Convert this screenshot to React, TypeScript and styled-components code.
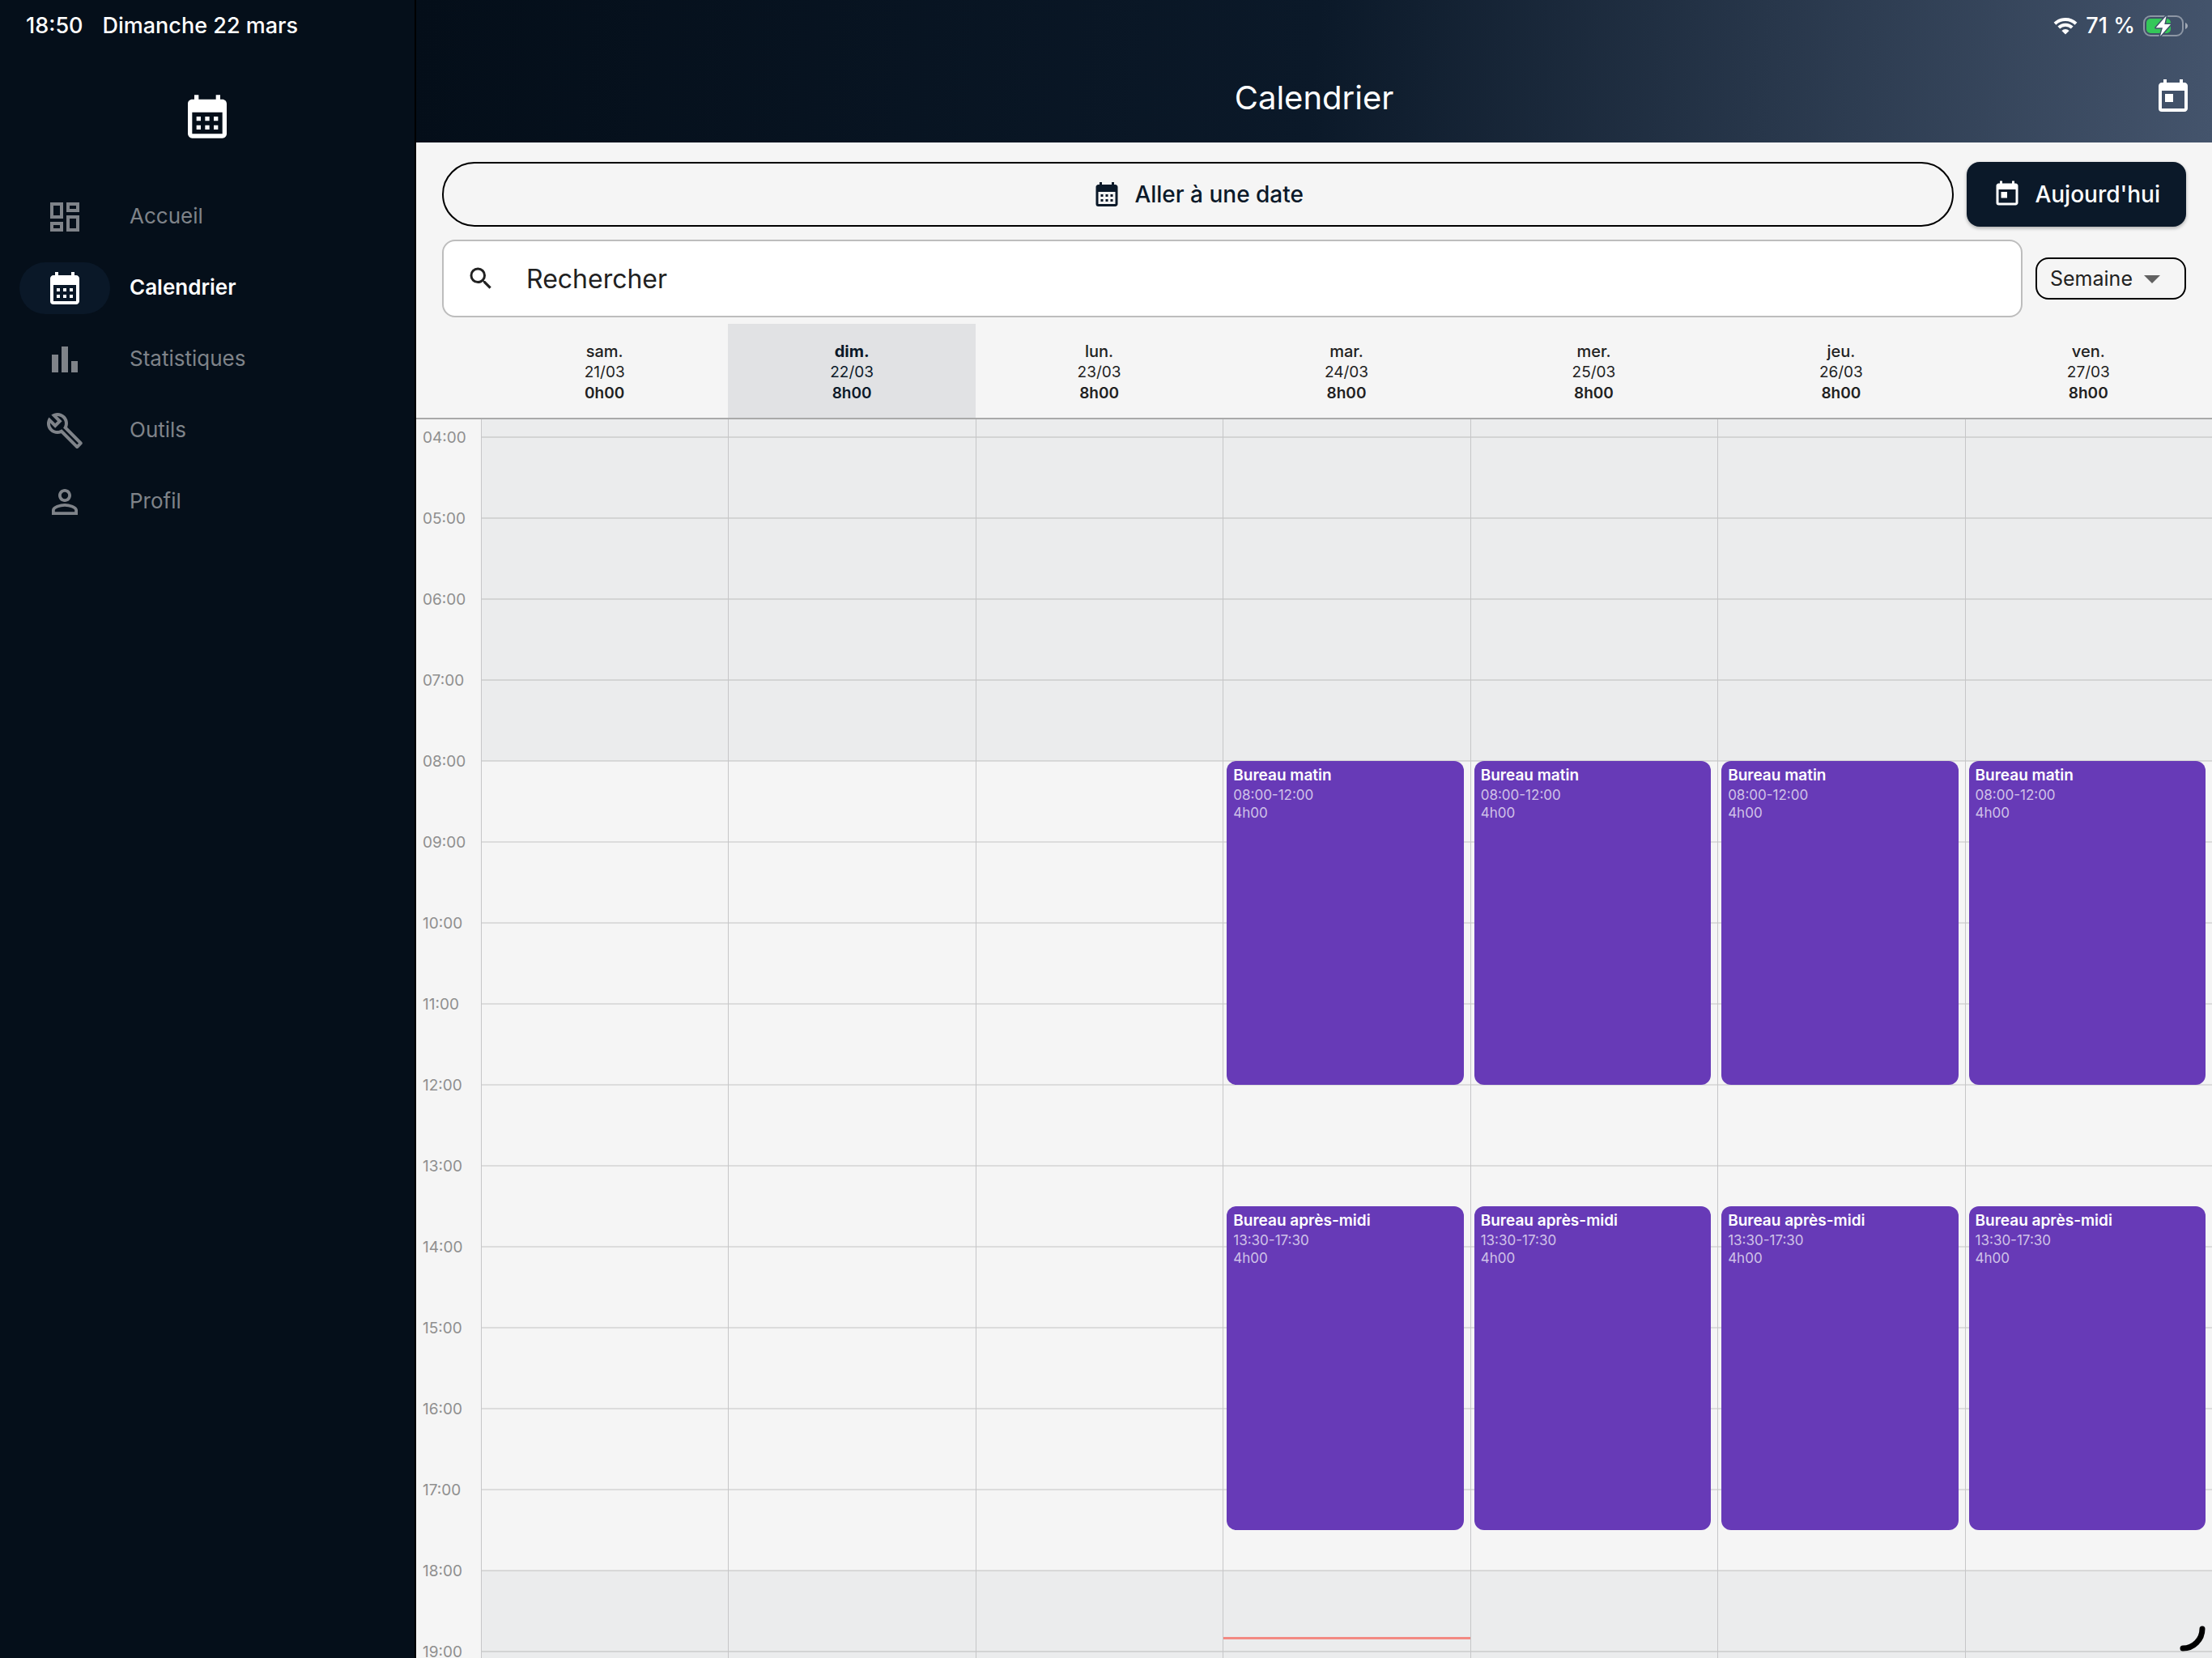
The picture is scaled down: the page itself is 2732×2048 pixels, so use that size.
import React, { useState } from 'react';
import styled, { createGlobalStyle } from 'styled-components';
import {
  MdArrowDropDown,
  MdBarChart,
  MdCalendarMonth,
  MdOutlineBuild,
  MdOutlineDashboard,
  MdPersonOutline,
  MdSearch,
  MdToday,
} from 'react-icons/md';

const FIRST_HOUR = 4;
const LAST_HOUR = 19;
const WORK_START = 8;
const WORK_END = 18;

const HOURS = Array.from({ length: LAST_HOUR - FIRST_HOUR + 1 }, (_, i) => FIRST_HOUR + i);

interface CalendarEvent {
  title: string;
  start: string;
  end: string;
  duration: string;
}

interface Day {
  name: string;
  date: string;
  total: string;
  today?: boolean;
  nowLine?: boolean;
  events: CalendarEvent[];
}

const WORKDAY: CalendarEvent[] = [
  { title: 'Bureau matin', start: '08:00', end: '12:00', duration: '4h00' },
  { title: 'Bureau après-midi', start: '13:30', end: '17:30', duration: '4h00' },
];

const DAYS: Day[] = [
  { name: 'sam.', date: '21/03', total: '0h00', events: [] },
  { name: 'dim.', date: '22/03', total: '8h00', today: true, events: [] },
  { name: 'lun.', date: '23/03', total: '8h00', events: [] },
  { name: 'mar.', date: '24/03', total: '8h00', nowLine: true, events: WORKDAY },
  { name: 'mer.', date: '25/03', total: '8h00', events: WORKDAY },
  { name: 'jeu.', date: '26/03', total: '8h00', events: WORKDAY },
  { name: 'ven.', date: '27/03', total: '8h00', events: WORKDAY },
];

const NAV_ITEMS = [
  { label: 'Accueil', icon: MdOutlineDashboard },
  { label: 'Calendrier', icon: MdCalendarMonth },
  { label: 'Statistiques', icon: MdBarChart },
  { label: 'Outils', icon: MdOutlineBuild },
  { label: 'Profil', icon: MdPersonOutline },
];

// Row 1 is the sliver above the first hour, then two rows per hour
const rowOf = (time: string) => {
  const [h, m] = time.split(':').map(Number);
  return 2 + (h - FIRST_HOUR) * 2 + (m >= 30 ? 1 : 0);
};

const isOff = (hour: number) => hour < WORK_START || hour >= WORK_END;

const GlobalStyle = createGlobalStyle`
  *, *::before, *::after {
    box-sizing: border-box;
  }

  body {
    margin: 0;
    background: #f5f5f5;
    color: #212121;
    font-family: Inter, 'Liberation Sans', sans-serif;
  }

  button, input, select {
    font-family: inherit;
    margin: 0;
  }
`;

const Screen = styled.div`
  display: flex;
  height: 100vh;
  overflow: hidden;
`;

const Sidebar = styled.aside`
  flex: none;
  width: 514px;
  background: #050f1a;
  border-right: 2px solid #000;
  color: #fff;
`;

const StatusBar = styled.div<{ $end?: boolean }>`
  display: flex;
  align-items: center;
  justify-content: ${props => (props.$end ? 'flex-end' : 'flex-start')};
  gap: ${props => (props.$end ? '10px' : '24px')};
  height: 64px;
  padding: 0 ${props => (props.$end ? '30px' : '32px')};
  color: #fff;
  font-size: 27px;
  font-weight: 500;
  line-height: 32px;
`;

const Logo = styled.div`
  display: flex;
  justify-content: center;
  padding: 48px 0;
`;

const Nav = styled.nav`
  display: flex;
  flex-direction: column;
`;

const NavLink = styled.a<{ $active: boolean }>`
  display: flex;
  align-items: center;
  gap: 24px;
  height: 88px;
  padding-left: 24px;
  color: ${props => (props.$active ? '#fff' : '#7f8389')};
  font-size: 26px;
  font-weight: ${props => (props.$active ? 600 : 400)};
  text-decoration: none;
`;

const NavIcon = styled.span<{ $active: boolean }>`
  display: flex;
  align-items: center;
  justify-content: center;
  width: 112px;
  height: 64px;
  border-radius: 32px;
  background: ${props => (props.$active ? '#0a1828' : 'transparent')};
`;

const NavLabel = styled.span`
  padding-bottom: 4px;
`;

const Main = styled.main`
  display: flex;
  flex-direction: column;
  flex: 1;
  min-width: 0;
`;

const Header = styled.header`
  flex: none;
  background: linear-gradient(95deg, #040e19 0%, #0b1929 50%, #44546c 100%);
`;

const AppBar = styled.div`
  display: grid;
  grid-template-columns: 1fr auto 1fr;
  align-items: center;
  height: 112px;
  padding: 0 24px;
  color: #fff;
`;

const Title = styled.h1`
  grid-column: 2;
  margin: 0;
  padding-top: 2px;
  font-size: 40px;
  font-weight: 400;
  line-height: 56px;
`;

const IconButton = styled.button`
  display: flex;
  justify-self: end;
  padding: 0;
  border: 0;
  background: none;
  color: inherit;
  cursor: pointer;
`;

const Toolbar = styled.div`
  display: flex;
  flex-direction: column;
  flex: none;
  gap: 16px;
  padding: 24px 32px 8px;
`;

const ToolbarRow = styled.div`
  display: flex;
  align-items: center;
  gap: 16px;
`;

const Button = styled.button<{ $filled?: boolean }>`
  display: flex;
  flex: ${props => (props.$filled ? 'none' : '1')};
  align-items: center;
  justify-content: center;
  gap: 16px;
  height: 80px;
  padding: 0 32px;
  border: ${props => (props.$filled ? '0' : '2px solid #000')};
  border-radius: ${props => (props.$filled ? '16px' : '40px')};
  background: ${props => (props.$filled ? '#0b1929' : 'transparent')};
  box-shadow: ${props => (props.$filled ? '0 2px 4px rgba(0, 0, 0, 0.3)' : 'none')};
  color: ${props => (props.$filled ? '#fff' : '#0b1929')};
  font-size: 28px;
  font-weight: 500;
  cursor: pointer;
`;

const SearchField = styled.label`
  display: flex;
  flex: 1;
  align-items: center;
  gap: 38px;
  height: 96px;
  padding: 0 28px;
  border: 2px solid #bdbdbd;
  border-radius: 16px;
  background: #fff;
  color: #212121;
`;

const SearchInput = styled.input`
  flex: 1;
  min-width: 0;
  padding: 2px 0 0;
  border: 0;
  outline: 0;
  background: none;
  color: #212121;
  font-size: 32px;
  line-height: 48px;

  &::placeholder {
    color: #212121;
    opacity: 1;
  }
`;

const SelectBox = styled.div`
  display: grid;
  grid-template-columns: auto 48px;
  align-items: center;
  height: 52px;
  padding: 0 16px;
  border: 2px solid #000;
  border-radius: 16px;
  color: #616161;
`;

const Select = styled.select`
  grid-row: 1;
  grid-column: 1 / 3;
  width: 100%;
  padding: 0 48px 0 0;
  border: 0;
  outline: 0;
  appearance: none;
  background: none;
  color: #212121;
  font-size: 25px;
  line-height: 40px;
`;

const SelectArrow = styled(MdArrowDropDown)`
  grid-row: 1;
  grid-column: 2;
  pointer-events: none;
`;

const WeekHeader = styled.div`
  display: grid;
  flex: none;
  grid-template-columns: 80px repeat(7, 1fr);
  border-bottom: 2px solid #a9a9a9;
`;

const DayHeading = styled.div<{ $today?: boolean }>`
  display: flex;
  flex-direction: column;
  align-items: center;
  height: 116px;
  padding-top: 21px;
  background: ${props => (props.$today ? '#e1e2e4' : 'transparent')};
  color: ${props => (props.$today ? '#0b1929' : '#212121')};
  font-size: 19px;
  line-height: 26px;

  &:first-of-type {
    grid-column: 2;
  }
`;

const DayName = styled.span<{ $today?: boolean }>`
  font-size: 20px;
  font-weight: ${props => (props.$today ? 700 : 500)};
`;

const DayTotal = styled.span`
  font-weight: 600;
`;

const Week = styled.div`
  display: grid;
  flex: 1;
  grid-template-columns: 80px repeat(7, 1fr);
  min-height: 0;
  overflow: hidden;
`;

const HourLabels = styled.div`
  display: flex;
  flex-direction: column;
  padding: 9px 8px 0;
  color: #8f8f8f;
  font-size: 19px;
  line-height: 28px;
`;

const HourLabel = styled.time`
  flex: none;
  height: 100px;
`;

const DayColumn = styled.div`
  display: grid;
  grid-template-rows: 22px repeat(${HOURS.length * 2}, 50px);
  grid-template-columns: 1fr;
  border-left: 1px solid #c6c6c8;
`;

const Slot = styled.div<{ $row: number; $off: boolean }>`
  grid-row: ${props => (props.$row === 1 ? '1' : `${props.$row} / span 2`)};
  grid-column: 1;
  border: solid rgba(0, 0, 0, 0.1);
  border-width: ${props => (props.$row === 1 ? '0 0 1px' : '1px 0')};
  background: ${props => (props.$off ? '#ebeced' : 'transparent')};
`;

const EventCard = styled.article<{ $from: number; $to: number }>`
  grid-row: ${props => props.$from} / ${props => props.$to};
  grid-column: 1;
  z-index: 1;
  margin: 0 8px 0 4px;
  padding: 5px 8px;
  border-radius: 12px;
  background: #673ab7;
  color: rgba(255, 255, 255, 0.7);
  font-size: 17px;
  line-height: 22px;
`;

const EventTitle = styled.h2`
  margin: 0;
  color: #fff;
  font-size: 19px;
  font-weight: 600;
  line-height: 26px;
`;

const EventText = styled.p`
  margin: 0;
`;

const NowLine = styled.div`
  grid-row: ${rowOf('18:30')};
  grid-column: 1;
  z-index: 1;
  height: 3px;
  margin-top: 32px;
  background: #f38a82;
`;

const Spinner = styled.svg`
  position: fixed;
  right: 8px;
  bottom: 8px;
`;

const WifiIcon = () => (
  <svg width="30" height="22" viewBox="0 0 30 22" fill="none" stroke="#fff" strokeWidth="4">
    <path d="M2 8.2a18.6 18.6 0 0 1 26 0" />
    <path d="M6.8 13a11.8 11.8 0 0 1 16.4 0" />
    <path d="M15 21.5l-4.6-4.6a6.6 6.6 0 0 1 9.2 0z" fill="#fff" stroke="none" />
  </svg>
);

const BatteryIcon = () => (
  <svg width="55" height="26" viewBox="0 0 55 26">
    <rect x="1" y="1" width="48" height="24" rx="8" fill="none" stroke="#fff" strokeOpacity="0.4" strokeWidth="2" />
    <path d="M52 9c4 1.6 4 6.4 0 8z" fill="#fff" fillOpacity="0.5" />
    <rect x="4" y="4" width="30" height="18" rx="5" fill="#34c759" />
    <path
      d="M28.6 .5L15.7 15.3H24L21 25.7L34 11H26.3z"
      fill="#fff"
      stroke="#40516a"
      strokeWidth="3"
      strokeLinejoin="round"
      paintOrder="stroke"
    />
  </svg>
);

const App: React.FC = () => {
  const [active, setActive] = useState('Calendrier');
  const [query, setQuery] = useState('');
  const [view, setView] = useState('Semaine');

  return (
    <Screen>
      <GlobalStyle />

      <Sidebar>
        <StatusBar>
          <span>18:50</span>
          <span>Dimanche 22 mars</span>
        </StatusBar>
        <Logo>
          <MdCalendarMonth size={64} />
        </Logo>
        <Nav>
          {NAV_ITEMS.map(({ label, icon: Icon }) => (
            <NavLink
              key={label}
              href={`#${label.toLowerCase()}`}
              $active={active === label}
              onClick={() => setActive(label)}
            >
              <NavIcon $active={active === label}>
                <Icon size={48} />
              </NavIcon>
              <NavLabel>{label}</NavLabel>
            </NavLink>
          ))}
        </Nav>
      </Sidebar>

      <Main>
        <Header>
          <StatusBar $end>
            <WifiIcon />
            <span>71 %</span>
            <BatteryIcon />
          </StatusBar>
          <AppBar>
            <Title>Calendrier</Title>
            <IconButton type="button" aria-label="Aujourd'hui">
              <MdToday size={48} />
            </IconButton>
          </AppBar>
        </Header>

        <Toolbar>
          <ToolbarRow>
            <Button type="button">
              <MdCalendarMonth size={36} />
              Aller à une date
            </Button>
            <Button type="button" $filled>
              <MdToday size={36} />
              Aujourd'hui
            </Button>
          </ToolbarRow>
          <ToolbarRow>
            <SearchField>
              <MdSearch size={36} />
              <SearchInput
                type="text"
                placeholder="Rechercher"
                aria-label="Rechercher"
                value={query}
                onChange={e => setQuery(e.target.value)}
              />
            </SearchField>
            <SelectBox>
              <Select aria-label="Affichage" value={view} onChange={e => setView(e.target.value)}>
                <option>Jour</option>
                <option>Semaine</option>
                <option>Mois</option>
              </Select>
              <SelectArrow size={48} />
            </SelectBox>
          </ToolbarRow>
        </Toolbar>

        <WeekHeader>
          {DAYS.map(day => (
            <DayHeading key={day.date} $today={day.today}>
              <DayName $today={day.today}>{day.name}</DayName>
              <span>{day.date}</span>
              <DayTotal>{day.total}</DayTotal>
            </DayHeading>
          ))}
        </WeekHeader>

        <Week>
          <HourLabels>
            {HOURS.map(hour => (
              <HourLabel key={hour}>{`${String(hour).padStart(2, '0')}:00`}</HourLabel>
            ))}
          </HourLabels>
          {DAYS.map(day => (
            <DayColumn key={day.date}>
              <Slot $row={1} $off />
              {HOURS.map(hour => (
                <Slot key={hour} $row={rowOf(`${hour}:00`)} $off={isOff(hour)} />
              ))}
              {day.events.map(event => (
                <EventCard key={event.start} $from={rowOf(event.start)} $to={rowOf(event.end)}>
                  <EventTitle>{event.title}</EventTitle>
                  <EventText>{`${event.start}-${event.end}`}</EventText>
                  <EventText>{event.duration}</EventText>
                </EventCard>
              ))}
              {day.nowLine && <NowLine />}
            </DayColumn>
          ))}
        </Week>
      </Main>

      <Spinner width="32" height="32" viewBox="0 0 32 32" fill="none" stroke="#000" strokeWidth="7" strokeLinecap="round">
        <path d="M28 4A24 24 0 0 1 4 28" />
      </Spinner>
    </Screen>
  );
};

export default App;
